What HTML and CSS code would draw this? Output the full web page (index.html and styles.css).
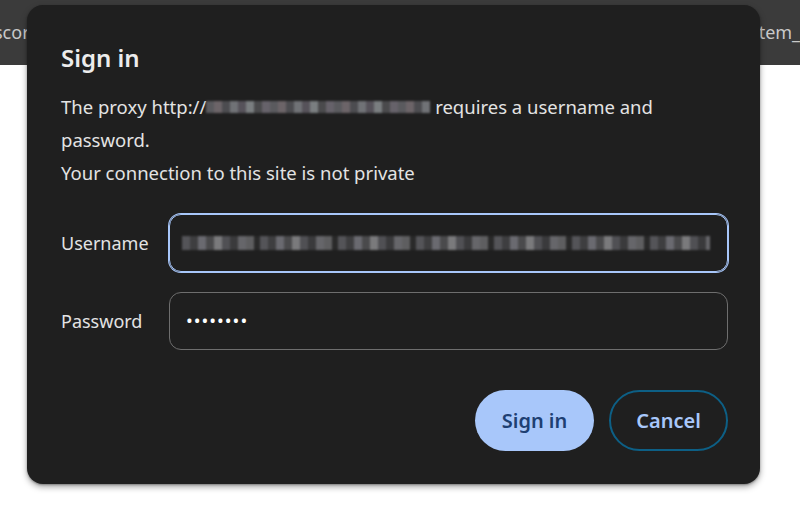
FILE: index.html
```html
<!DOCTYPE html>
<html lang="en">
<head>
<meta charset="utf-8">
<title>Sign in</title>
<link rel="stylesheet" href="styles.css">
</head>
<body>
<header class="tabbar">
  <span class="tab-text tab-left">scor</span>
  <span class="tab-text tab-right">tem_S</span>
</header>
<main class="page"></main>

<div class="dialog" role="dialog" aria-labelledby="dlg-title">
  <h2 class="dialog-title" id="dlg-title">Sign in</h2>
  <div class="dialog-text">
    <p class="msg">The proxy http://<span class="redacted redacted-url" aria-hidden="true"></span> requires a username and password.</p>
    <p class="msg">Your connection to this site is not private</p>
  </div>
  <div class="form">
    <label class="label">Username</label>
    <div class="field field-focused"><span class="redacted redacted-user" aria-hidden="true"></span></div>
    <label class="label">Password</label>
    <div class="field"><span class="dots">••••••••</span></div>
  </div>
  <div class="actions">
    <button class="btn btn-primary">Sign in</button>
    <button class="btn btn-outline">Cancel</button>
  </div>
</div>
</body>
</html>
```
FILE: styles.css
```css
* { box-sizing: border-box; }

html, body {
  margin: 0;
  padding: 0;
  width: 800px;
  height: 506px;
  overflow: hidden;
  background: #ffffff;
  font-family: "Noto Sans", "Open Sans", sans-serif;
}

.tabbar {
  height: 65px;
  background: #3b3b3b;
  display: flex;
  justify-content: space-between;
  align-items: center;
  overflow: hidden;
  padding-bottom: 2px;
}

.tab-text {
  color: #c9c9c9;
  font-size: 18px;
  white-space: nowrap;
}

.tab-left { margin-left: -6px; }
.tab-right { margin-right: -10px; }

.page {
  height: 441px;
  background: #ffffff;
}

.dialog {
  position: absolute;
  left: 27px;
  top: 5px;
  width: 733px;
  height: 479px;
  background: #1f1f1f;
  border-radius: 16px;
  box-shadow: 0 3px 6px rgba(0, 0, 0, 0.35), 0 1px 2px rgba(0, 0, 0, 0.3);
  padding: 38px 32px 33px 34px;
  display: flex;
  flex-direction: column;
  color: #e3e3e3;
}

.dialog-title {
  margin: 0;
  font-size: 24px;
  line-height: 30px;
  font-weight: 600;
  color: #ececec;
}

.dialog-text {
  margin-top: 17px;
  font-size: 18.5px;
  line-height: 33px;
  width: 640px;
}

.msg { margin: 0; }

.redacted {
  display: inline-block;
  vertical-align: middle;
  filter: blur(1.2px);
}

.redacted-url {
  width: 224px;
  height: 12px;
  margin-top: -4px;
  background: repeating-linear-gradient(90deg,
    #5a5a5e 0 8px, #6c6468 8px 16px, #4c4c50 16px 24px, #707276 24px 32px,
    #56525a 32px 40px, #7a7e80 40px 48px, #4a4a4c 48px 56px, #66626a 56px 64px);
}

.form {
  margin-top: 25px;
  display: grid;
  grid-template-columns: 108px 1fr;
  row-gap: 20px;
  align-items: center;
}

.label {
  font-size: 18px;
  color: #e3e3e3;
}

.field {
  height: 58px;
  border: 1px solid #6e6e6e;
  border-radius: 12px;
  display: flex;
  align-items: center;
  padding: 0 16px;
}

.field-focused {
  border-color: #a8c7fa;
  box-shadow: 0 0 0 1px #a8c7fa;
}

.redacted-user {
  width: 528px;
  height: 14px;
  margin-left: -4px;
  background: repeating-linear-gradient(90deg,
    #545458 0 8px, #3e3e40 8px 16px, #6a6a70 16px 24px, #4a4a4c 24px 32px,
    #7a7a7c 32px 40px, #505054 40px 48px, #3a3a3c 48px 56px, #66666a 56px 64px,
    #5e5e60 64px 72px, #2a2a2a 72px 78px);
}

.dots {
  color: #ffffff;
  font-size: 18px;
  letter-spacing: 1px;
  margin-top: -2px;
}

.actions {
  margin-top: 40px;
  display: flex;
  justify-content: flex-end;
  gap: 15px;
}

.btn {
  height: 61px;
  border-radius: 31px;
  font-family: "Noto Sans", "Open Sans", sans-serif;
  font-size: 20px;
  font-weight: 600;
  cursor: pointer;
}

.btn-primary {
  width: 119px;
  background: #a8c7fa;
  color: #1e3f72;
  border: none;
}

.btn-outline {
  width: 119px;
  background: transparent;
  color: #a8c7fa;
  border: 2px solid #0d5f85;
}
```
